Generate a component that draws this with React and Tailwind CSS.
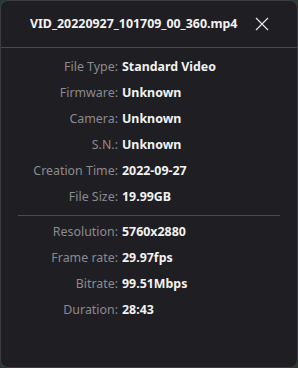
const general = [
  ["File Type", "Standard Video"],
  ["Firmware", "Unknown"],
  ["Camera", "Unknown"],
  ["S.N.", "Unknown"],
  ["Creation Time", "2022-09-27"],
  ["File Size", "19.99GB"],
];

const media = [
  ["Resolution", "5760x2880"],
  ["Frame rate", "29.97fps"],
  ["Bitrate", "99.51Mbps"],
  ["Duration", "28:43"],
];

const Row = ({ label, value }) => (
  <div className="flex h-[26px] items-center">
    <span className="w-[117px] shrink-0 text-right text-[#8b8b8f]">{label}:</span>
    <span className="pl-[4px] font-bold text-[#f2f2f2]">{value}</span>
  </div>
);

export default function App() {
  return (
    <div className="h-[368px] w-[298px] bg-[#2a3a30]">
      <div
        className="flex h-full w-full flex-col overflow-hidden rounded-[8px] border border-[#3b3b40] bg-[#1f1e23] text-[12.4px]"
        style={{ fontFamily: '"Noto Sans", "Open Sans", sans-serif' }}
      >
        <div className="flex h-[47px] shrink-0 items-center border-b border-[#4a4a4f] pl-[29px] pr-[28px]">
          <span className="flex-1 font-bold text-[#f2f2f2]">VID_20220927_101709_00_360.mp4</span>
          <svg width="14" height="14" viewBox="0 0 14 14" className="text-[#e6e6e6]">
            <path d="M1 1 L13 13 M13 1 L1 13" stroke="currentColor" strokeWidth="1.2" fill="none" />
          </svg>
        </div>
        <div className="pt-[6px]">
          {general.map(([l, v]) => (
            <Row key={l} label={l} value={v} />
          ))}
        </div>
        <div className="mx-[17px] mt-[5px] mb-[3px] border-t border-[#4a4a4f]" />
        <div>
          {media.map(([l, v]) => (
            <Row key={l} label={l} value={v} />
          ))}
        </div>
      </div>
    </div>
  );
}
